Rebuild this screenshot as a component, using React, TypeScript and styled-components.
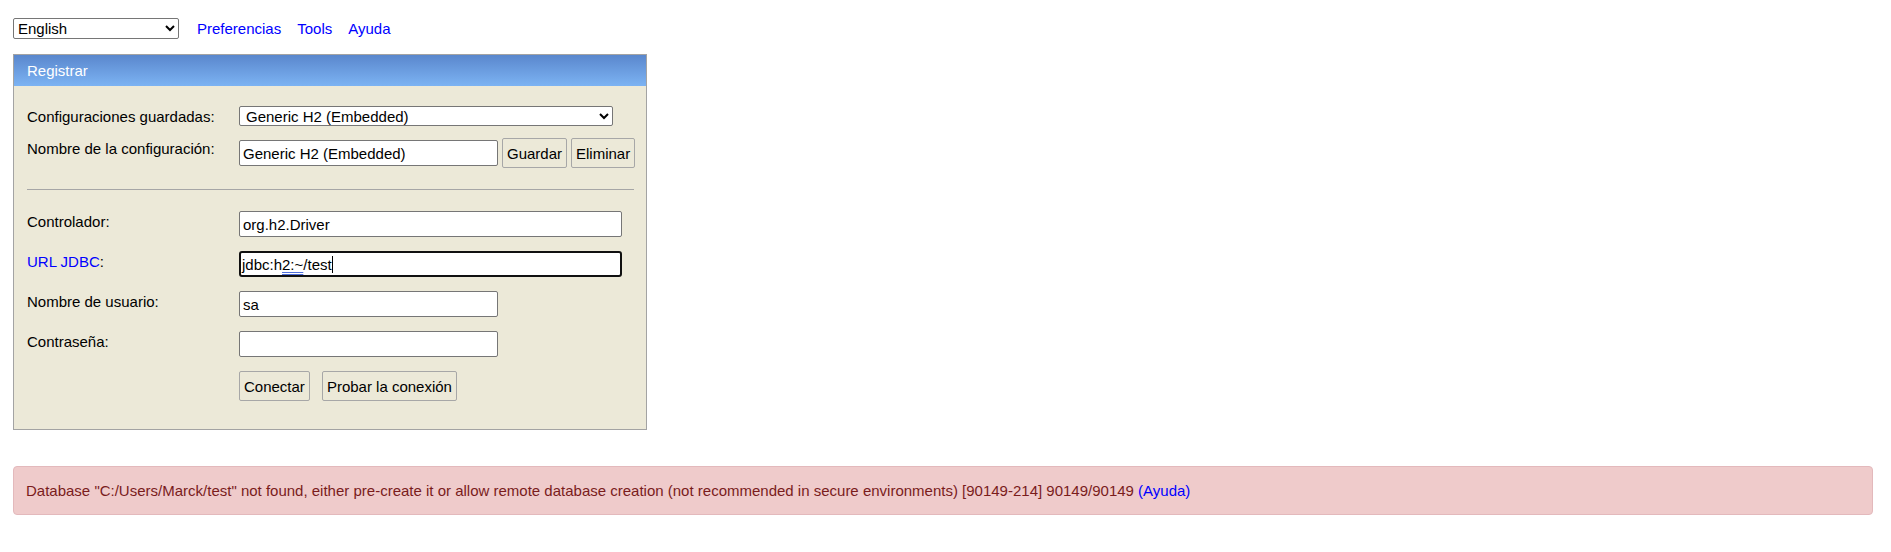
import styled, { createGlobalStyle } from "styled-components";

const GlobalStyle = createGlobalStyle`
  body {
    margin: 0;
    background: #ffffff;
    font-family: "Liberation Sans", Arial, sans-serif;
    font-size: 15px;
    color: #000;
  }
`;

const Page = styled.div`
  padding: 18px 18px 0 13px;
`;

const TopBar = styled.div`
  display: flex;
  align-items: center;
  gap: 16px;
  height: 21px;
`;

const LangSelect = styled.select`
  width: 166px;
  height: 21px;
  margin-right: 2px;
  font: 15px "Liberation Sans", Arial, sans-serif;
  border: 1px solid #767676;
  border-radius: 2px;
  background: #fff;
  color: #000;
`;

const Link = styled.a`
  color: #0000ff;
  text-decoration: none;
  line-height: 17px;
`;

const Panel = styled.div`
  width: 634px;
  box-sizing: border-box;
  margin-top: 15px;
  border: 1px solid #a3a3a3;
  background: #ece9d8;
`;

const Header = styled.div`
  height: 31px;
  display: flex;
  align-items: center;
  padding-left: 13px;
  background: linear-gradient(#5a87cd, #7cb3f3);
  color: #ffffff;
`;

const Body = styled.div`
  padding: 20px 12px 28px 13px;
  display: flex;
  flex-direction: column;
`;

const Row = styled.div<{ $mt?: number }>`
  display: grid;
  grid-template-columns: 212px 1fr;
  align-items: start;
  margin-top: ${(p) => p.$mt ?? 0}px;
`;

const Label = styled.div`
  padding-top: 2px;
  line-height: 17px;
  color: #000;
`;

const Fields = styled.div<{ $gap?: number }>`
  display: flex;
  align-items: center;
  gap: ${(p) => p.$gap ?? 4}px;
`;

const ConfigSelect = styled.select`
  width: 374px;
  height: 20px;
  font: 15px "Liberation Sans", Arial, sans-serif;
  border: 1px solid #767676;
  border-radius: 2px;
  background: #fff;
  color: #000;
  padding: 0 2px;
`;

const TextInput = styled.input<{ $w: number }>`
  width: ${(p) => p.$w}px;
  height: 26px;
  box-sizing: border-box;
  padding: 0 3px;
  border: 1px solid #767676;
  border-radius: 2px;
  background: #fff;
  font: 15px "Liberation Sans", Arial, sans-serif;
  color: #000;
  outline: none;
`;

const FocusedField = styled.div<{ $w: number }>`
  width: ${(p) => p.$w}px;
  height: 26px;
  box-sizing: border-box;
  display: flex;
  align-items: center;
  padding: 0 1px;
  border: 2px solid #101010;
  border-radius: 3px;
  background: #fff;
  color: #000;
  white-space: pre;
`;

const Marked = styled.span`
  text-decoration: underline double #4f6fdc;
  text-underline-offset: 2px;
`;

const Caret = styled.span`
  display: inline-block;
  width: 1px;
  height: 17px;
  background: #000;
`;

const Button = styled.button`
  height: 30px;
  padding: 0 4px;
  box-sizing: border-box;
  border: 1px solid #a7a7a7;
  border-radius: 2px;
  background: #ece9d8;
  font: 15px "Liberation Sans", Arial, sans-serif;
  color: #000;
`;

const Divider = styled.div`
  margin: 21px 0;
  border-top: 1px solid #a6a6a6;
`;

const Alert = styled.div`
  margin-top: 36px;
  padding: 15px 12px;
  line-height: 16px;
  border: 1px solid #e3b9bc;
  border-radius: 4px;
  background: #efcbcb;
  color: #7a1c1c;
`;

function App() {
  return (
    <>
      <GlobalStyle />
      <Page>
        <TopBar>
          <LangSelect defaultValue="en">
            <option value="en">English</option>
          </LangSelect>
          <Link href="#">Preferencias</Link>
          <Link href="#">Tools</Link>
          <Link href="#">Ayuda</Link>
        </TopBar>

        <Panel>
          <Header>Registrar</Header>
          <Body>
            <Row>
              <Label>Configuraciones guardadas:</Label>
              <Fields>
                <ConfigSelect defaultValue="h2e">
                  <option value="h2e">Generic H2 (Embedded)</option>
                </ConfigSelect>
              </Fields>
            </Row>
            <Row $mt={12}>
              <Label>Nombre de la configuración:</Label>
              <Fields>
                <TextInput $w={259} defaultValue="Generic H2 (Embedded)" />
                <Button>Guardar</Button>
                <Button>Eliminar</Button>
              </Fields>
            </Row>

            <Divider />

            <Row>
              <Label>Controlador:</Label>
              <Fields>
                <TextInput $w={383} defaultValue="org.h2.Driver" />
              </Fields>
            </Row>
            <Row $mt={14}>
              <Label>
                <Link href="#">URL JDBC</Link>:
              </Label>
              <Fields>
                <FocusedField $w={383}>
                  jdbc:h<Marked>2:~</Marked>/test<Caret />
                </FocusedField>
              </Fields>
            </Row>
            <Row $mt={14}>
              <Label>Nombre de usuario:</Label>
              <Fields>
                <TextInput $w={259} defaultValue="sa" />
              </Fields>
            </Row>
            <Row $mt={14}>
              <Label>Contraseña:</Label>
              <Fields>
                <TextInput $w={259} type="password" defaultValue="" />
              </Fields>
            </Row>
            <Row $mt={14}>
              <div />
              <Fields $gap={12}>
                <Button>Conectar</Button>
                <Button>Probar la conexión</Button>
              </Fields>
            </Row>
          </Body>
        </Panel>

        <Alert>
          Database "C:/Users/Marck/test" not found, either pre-create it or allow remote
          database creation (not recommended in secure environments) [90149-214] 90149/90149{" "}
          <Link href="#">(Ayuda)</Link>
        </Alert>
      </Page>
    </>
  );
}

export default App;
